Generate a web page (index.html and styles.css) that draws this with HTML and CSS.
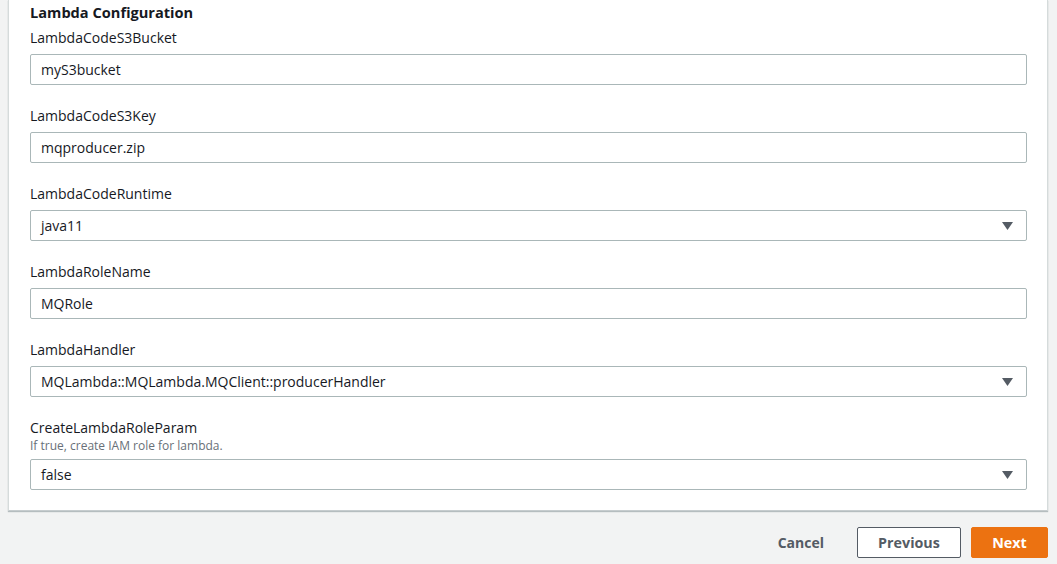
FILE: index.html
```html
<!DOCTYPE html>
<html>
<head>
<meta charset="utf-8">
<link rel="stylesheet" href="styles.css">
</head>
<body>
<div class="card">
  <h2 class="title">Lambda Configuration</h2>
  <div class="field">
    <label class="label">LambdaCodeS3Bucket</label>
    <div class="input">myS3bucket</div>
  </div>
  <div class="field">
    <label class="label">LambdaCodeS3Key</label>
    <div class="input">mqproducer.zip</div>
  </div>
  <div class="field">
    <label class="label">LambdaCodeRuntime</label>
    <div class="input select"><span>java11</span><svg class="caret" width="11" height="8" viewBox="0 0 11 8"><path d="M0 0H11L5.5 8Z" fill="#545b64"/></svg></div>
  </div>
  <div class="field">
    <label class="label">LambdaRoleName</label>
    <div class="input">MQRole</div>
  </div>
  <div class="field">
    <label class="label">LambdaHandler</label>
    <div class="input select"><span>MQLambda::MQLambda.MQClient::producerHandler</span><svg class="caret" width="11" height="8" viewBox="0 0 11 8"><path d="M0 0H11L5.5 8Z" fill="#545b64"/></svg></div>
  </div>
  <div class="field last">
    <label class="label">CreateLambdaRoleParam</label>
    <div class="desc">If true, create IAM role for lambda.</div>
    <div class="input select"><span>false</span><svg class="caret" width="11" height="8" viewBox="0 0 11 8"><path d="M0 0H11L5.5 8Z" fill="#545b64"/></svg></div>
  </div>
</div>
<div class="actions">
  <button class="btn link">Cancel</button>
  <button class="btn normal">Previous</button>
  <button class="btn primary">Next</button>
</div>
</body>
</html>
```
FILE: styles.css
```css
html, body {
  margin: 0;
  padding: 0;
  background: #f2f3f3;
  font-family: "Open Sans", "Noto Sans", sans-serif;
  color: #16191f;
}
.card {
  margin-left: 8px;
  width: 1040px;
  box-sizing: border-box;
  background: #fff;
  border-left: 1px solid #d5dbdb;
  border-right: 1px solid #d5dbdb;
  border-bottom: 1px solid #c6ccce;
  box-shadow: 0 1px 1px rgba(0,28,36,0.25);
  padding: 2px 20px 20px 21px;
}
.title {
  margin: 0;
  font-size: 14.6px;
  font-weight: 700;
  line-height: 20px;
}
.field {
  margin-top: 6px;
  margin-bottom: 21px;
}
.field.last { margin-bottom: 0; }
.label {
  display: block;
  font-size: 14px;
  line-height: 20px;
  margin-bottom: 6px;
}
.desc {
  font-size: 12px;
  color: #687078;
  line-height: 16px;
  margin-top: -6px;
  margin-bottom: 5px;
}
.input {
  box-sizing: border-box;
  height: 31px;
  border: 1px solid #aab7b8;
  border-radius: 2px;
  padding: 0 10px;
  font-size: 14px;
  line-height: 29px;
  display: flex;
  align-items: center;
  justify-content: space-between;
}
.caret { margin-right: 3px; }
.actions {
  display: flex;
  justify-content: flex-end;
  align-items: center;
  gap: 10px;
  padding: 16px 9px 0 0;
}
.btn {
  font-family: inherit;
  font-size: 14.3px;
  font-weight: 700;
  height: 31px;
  border-radius: 2px;
  box-sizing: border-box;
  cursor: pointer;
}
.link {
  background: none;
  border: none;
  color: #545b64;
  padding: 0 18px;
  margin-right: 5px;
  font-size: 14px;
}
.normal {
  background: #fff;
  border: 1px solid #545b64;
  color: #545b64;
  width: 104px;
}
.primary {
  background: #ec7211;
  border: 1px solid #ec7211;
  color: #fff;
  width: 77px;
}
```
